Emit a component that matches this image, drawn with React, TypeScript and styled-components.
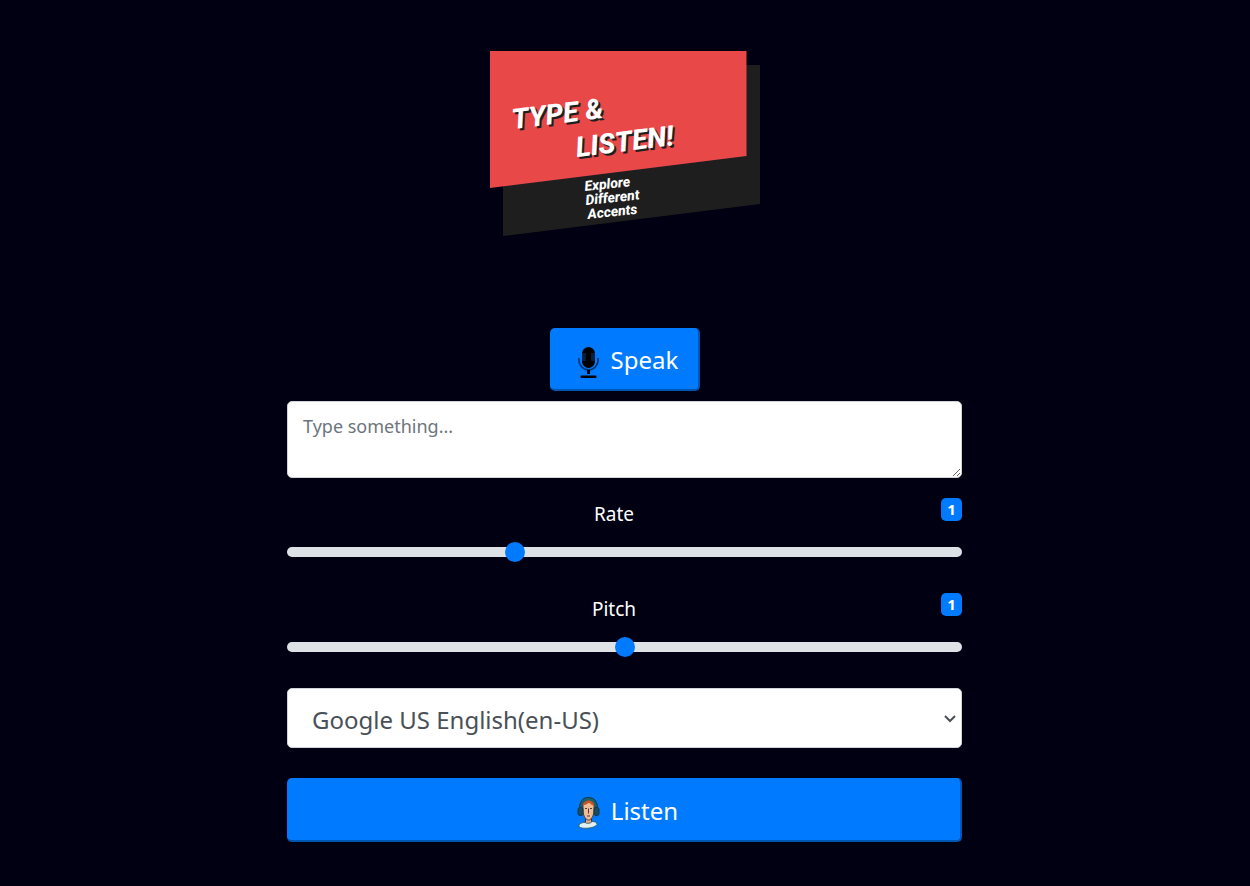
import React, { useState } from "react";
import styled, { createGlobalStyle } from "styled-components";

const GlobalStyle = createGlobalStyle`
  *, *::before, *::after { box-sizing: border-box; }
  html { background: #000012; }
  body {
    margin: 0;
    background: #000012;
    color: #fff;
    font-family: "Segoe UI", "Noto Sans", "Open Sans", sans-serif;
    font-size: 19px;
    line-height: 32px;
  }
`;

const Shell = styled.div`
  display: grid;
  grid-template-columns: 287fr 675fr 288fr;
`;

const Page = styled.main`
  grid-column: 2;
  padding: 50px 0 44px;
  display: flex;
  flex-direction: column;
`;

const Logo = styled.svg`
  display: block;
  align-self: center;
  width: 272px;
  height: 188px;
  margin-bottom: 90px;
`;

const LogoText = styled.text`
  font-family: Roboto, "Liberation Sans", sans-serif;
  font-weight: 800;
  font-style: italic;
`;

const Button = styled.button<{ $wide?: boolean }>`
  display: flex;
  align-items: center;
  justify-content: center;
  gap: 10px;
  align-self: ${(p) => (p.$wide ? "stretch" : "center")};
  width: ${(p) => (p.$wide ? "auto" : "150px")};
  height: ${(p) => (p.$wide ? "64px" : "63px")};
  padding: 2px 0 0 8px;
  border: 0 solid #0056b3;
  border-width: 0 2px 2px 0;
  border-radius: 5px;
  background: #007bff;
  color: #fff;
  font-family: inherit;
  font-size: 24px;
  cursor: pointer;
`;

const Icon = styled.svg`
  width: 24px;
  height: 34px;
  margin-top: 6px;
`;

const TextBox = styled.textarea`
  display: block;
  width: 100%;
  height: 77px;
  margin: 10px 0 20px;
  padding: 8px 15px;
  border: 1px solid #ced4da;
  border-radius: 5px;
  background: #fff;
  color: #495057;
  font: inherit;
  font-size: 18px;
  resize: vertical;
  &::placeholder { color: #6c757d; opacity: 1; }
`;

const Field = styled.div`
  height: 95px;
`;

const FieldHead = styled.div`
  display: flex;
  align-items: flex-start;
  height: 40px;
`;

const Label = styled.label`
  flex: 1;
  text-align: center;
`;

const Badge = styled.output`
  width: 21px;
  height: 23px;
  border-radius: 5px;
  background: #007bff;
  font-size: 15px;
  font-weight: 700;
  line-height: 23px;
  text-align: center;
`;

const Range = styled.input`
  display: block;
  appearance: none;
  width: 100%;
  height: 28px;
  margin: 0;
  background: transparent;
  &::-webkit-slider-runnable-track {
    height: 10px;
    border-radius: 20px;
    background: #dee2e6;
  }
  &::-webkit-slider-thumb {
    appearance: none;
    width: 20px;
    height: 20px;
    margin-top: -5px;
    border-radius: 50%;
    background: #007bff;
  }
`;

const SelectWrap = styled.div`
  position: relative;
  margin-bottom: 30px;
`;

const Select = styled.select`
  display: block;
  appearance: none;
  width: 100%;
  height: 60px;
  padding: 2px 24px 0 24px;
  border: 1px solid #ced4da;
  border-radius: 5px;
  background: #fff;
  color: #495057;
  font-family: inherit;
  font-size: 24px;
`;

const Chevron = styled.svg`
  position: absolute;
  right: 6px;
  top: 26px;
  width: 12px;
  height: 9px;
  pointer-events: none;
`;

function Slider({ id, label, max, min }: { id: string; label: string; max: number; min: number }) {
  const [value, setValue] = useState(1);
  return (
    <Field>
      <FieldHead>
        <Label htmlFor={id}>{label}</Label>
        <Badge htmlFor={id}>{value}</Badge>
      </FieldHead>
      <Range id={id} type="range" min={min} max={max} step={0.1} value={value}
        onChange={(e) => setValue(Number(e.target.value))} />
    </Field>
  );
}

const Microphone = () => (
  <Icon viewBox="0 0 24 34" aria-hidden="true">
    <rect x="5" y="1" width="13" height="21" rx="6.5" fill="#000" />
    <path d="M5 8h4M5 10h4M5 12h4M5 14h4M14 8h4M14 10h4M14 12h4M14 14h4" stroke="#06437f" strokeWidth="1.2" />
    <path d="M2 12v2.500a9.500 9.500 0 0 0 19 0V12" fill="none" stroke="#06336b" strokeWidth="1.800" />
    <path d="M10 24h3v4h-3z" fill="#000" />
    <rect x="3.500" y="29.500" width="16" height="2.500" rx="1" fill="#000" />
  </Icon>
);

const Listener = () => (
  <Icon viewBox="0 0 24 34" aria-hidden="true">
    <path d="M2.500 15C2 6 5 1.500 11.500 1.500S21 6 20.500 15l-3 2h-12z" fill="#17606e" stroke="#173645" strokeWidth="1" />
    <path d="M8.500 20h6v6l4 2c0 2-3 3-7 3s-7-1-7-3l4-2z" fill="#e0a98b" stroke="#30383f" strokeWidth="1" />
    <path d="M2 29c1-2 4-2.500 6-2.500 2 1.500 6 1 7-1 3 0 5 1 5 3-2 4-16 5-18 2z" fill="#dff1f3" stroke="#40545c" strokeWidth=".8" />
    <path d="M6 9c3-4 8-4 11 0v7c-1 5-3 8-5.500 8S7 21 6 16z" fill="#f1bd98" stroke="#493b38" strokeWidth="1" />
    <path d="M5.500 9.500c1-6 11-7 12 0-3 0-4-2-5.500-3-2 2-4 2-6.500 3z" fill="#c55526" />
    <path d="M8 12.500h2M13 12.500h2M11.500 12.500v5M10 20h3" stroke="#493b38" strokeWidth="1" />
    <rect x="1" y="11.500" width="5" height="8" rx="2" fill="#174e5e" stroke="#173645" />
    <rect x="17" y="11.500" width="5" height="8" rx="2" fill="#174e5e" stroke="#173645" />
  </Icon>
);

export default function App() {
  return (
    <>
      <GlobalStyle />
      <Shell>
        <Page>
          <Logo viewBox="0 0 272 188" role="img" aria-label="Type & Listen! Explore Different Accents">
            <path d="M14 15H271V154L14 186Z" fill="#1e1e1e" />
            <path d="M1 1H257.500V106L1 138Z" fill="#e84848" />
            <g fill="#1e1e1e" fontSize="28">
              <LogoText transform="translate(26 81) rotate(-7)">TYPE &amp;</LogoText>
              <LogoText transform="translate(90 109) rotate(-7)">LISTEN!</LogoText>
            </g>
            <g fill="#fff" fontSize="28">
              <LogoText transform="translate(24 79) rotate(-7)">TYPE &amp;</LogoText>
              <LogoText transform="translate(88 107) rotate(-7)">LISTEN!</LogoText>
            </g>
            <g fill="#fff" fontSize="14">
              <LogoText transform="translate(96 141) rotate(-6)">Explore</LogoText>
              <LogoText transform="translate(97 155) rotate(-6)">Different</LogoText>
              <LogoText transform="translate(99 169) rotate(-6)">Accents</LogoText>
            </g>
          </Logo>
          <Button type="button"><Microphone />Speak</Button>
          <TextBox aria-label="Text to read aloud" placeholder="Type something..." />
          <Slider id="rate" label="Rate" min={0.5} max={2} />
          <Slider id="pitch" label="Pitch" min={0} max={2} />
          <SelectWrap>
            <Select aria-label="Voice" defaultValue="us">
              <option value="us">Google US English(en-US)</option>
            </Select>
            <Chevron viewBox="0 0 12 9" aria-hidden="true">
              <path d="M1 2l5 5 5-5" fill="none" stroke="#495057" strokeWidth="2" />
            </Chevron>
          </SelectWrap>
          <Button type="button" $wide><Listener />Listen</Button>
        </Page>
      </Shell>
    </>
  );
}
